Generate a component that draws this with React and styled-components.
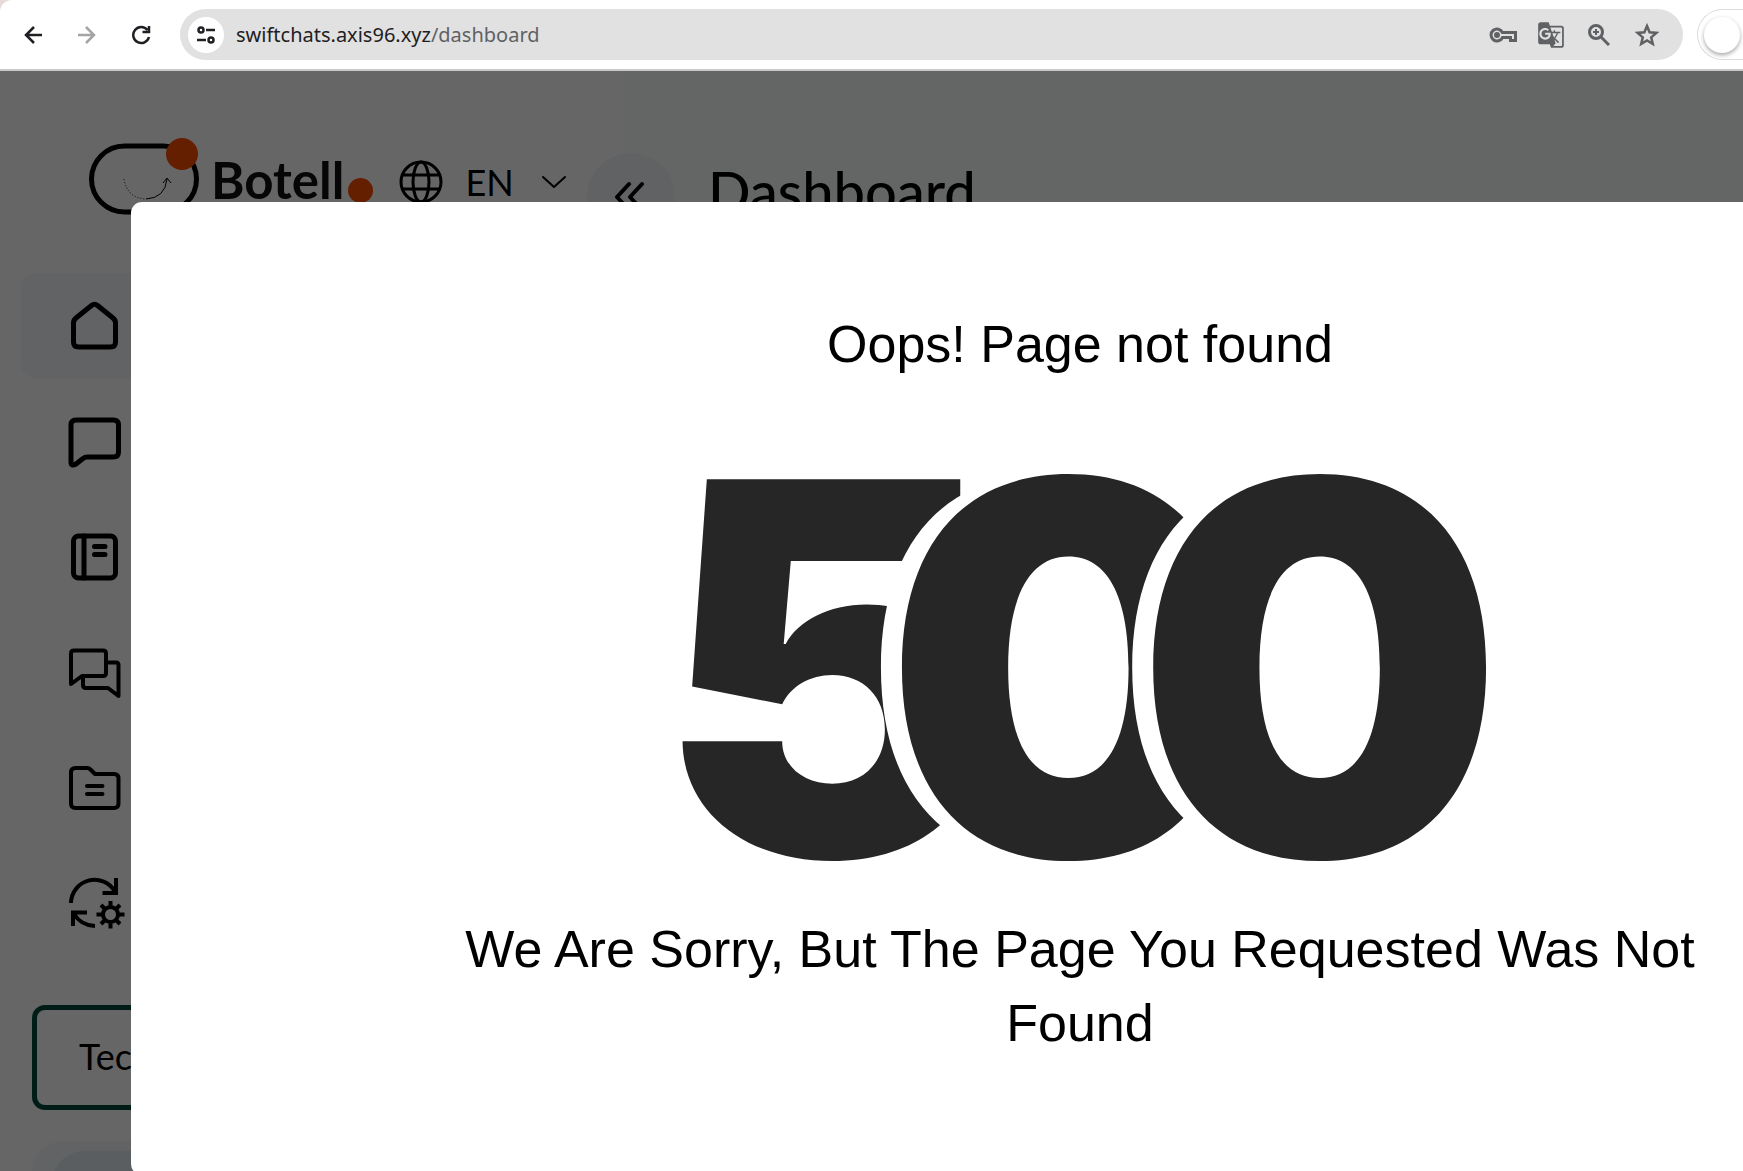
import React from 'react';
import styled, { createGlobalStyle } from 'styled-components';
import { MdGTranslate } from 'react-icons/md';

const GlobalStyle = createGlobalStyle`
  * {
    box-sizing: border-box;
  }

  body {
    margin: 0;
    background: #fff;
    color: #000;
    font-family: 'Lato', sans-serif;
  }

  h1,
  h2,
  p {
    margin: 0;
    font-weight: 400;
  }

  button,
  input,
  select {
    font: inherit;
    color: inherit;
    border: 0;
    padding: 0;
    background: none;
  }
`;

const Page = styled.div`
  height: 100vh;
  display: flex;
  flex-direction: column;
  overflow: hidden;
  background: #e6dbd9;
`;

/* browser bar */

const Toolbar = styled.header`
  display: flex;
  align-items: center;
  flex: none;
  height: 71px;
  padding-left: 18px;
  border-bottom: 2px solid #c7cac8;
  border-top-left-radius: 12px;
  background: #fff;
`;

const NavButton = styled.button`
  display: flex;
  justify-content: center;
  width: 30px;
  margin-right: 24px;
  color: ${(props) => (props.disabled ? '#a3a4a6' : '#1f2023')};
`;

const AddressBar = styled.div`
  display: flex;
  align-items: center;
  flex: 1;
  height: 51px;
  padding: 0 22px 0 8px;
  border-radius: 26px;
  background: #e1e1e1;
`;

const SiteInfo = styled.button`
  display: flex;
  align-items: center;
  justify-content: center;
  width: 36px;
  height: 36px;
  border-radius: 50%;
  background: #fff;
  color: #1f2023;
`;

const Url = styled.a`
  flex: 1;
  margin-left: 12px;
  font-family: 'Noto Sans', sans-serif;
  font-size: 20px;
  line-height: 30px;
  color: #5f6164;
  text-decoration: none;

  strong {
    font-weight: 400;
    color: #1f2023;
  }
`;

const Actions = styled.div`
  display: flex;
  gap: 20px;
  color: #5f6164;
`;

const ActionButton = styled.button`
  display: flex;
  align-items: center;
  justify-content: center;
  width: 28px;
  height: 28px;
`;

const Profile = styled.button`
  flex: none;
  width: 46px;
  height: 51px;
  margin-left: 14px;
  padding-left: 6px;
  border: 1px solid #dcdcdc;
  border-right: 0;
  border-radius: 26px 0 0 26px;
`;

const Avatar = styled.span`
  display: block;
  width: 36px;
  height: 36px;
  border-radius: 50%;
  background: #fff;
  box-shadow: 0 2px 4px rgba(0, 0, 0, 0.35);
`;

/* app behind the dialog */

const Viewport = styled.div`
  position: relative;
  display: flex;
  flex: 1;
  min-height: 0;
  overflow: hidden;
  background: #fff;
`;

const Sidebar = styled.aside`
  position: relative;
  flex: none;
  width: 624px;
`;

const Brand = styled.div`
  display: flex;
  align-items: flex-start;
  height: 202px;
  padding: 66px 0 0 88px;
`;

const BrandName = styled.span`
  margin: 11px 4px 0 9px;
  font-size: 51px;
  line-height: 64px;
  font-weight: 700;
  color: #101010;
`;

const BrandDot = styled.span`
  flex: none;
  width: 25px;
  height: 25px;
  margin-top: 41px;
  border-radius: 50%;
  background: #fa4b00;
`;

const Language = styled.label`
  display: flex;
  align-items: center;
  height: 44px;
  margin: 23px 0 0 26px;

  select {
    width: 52px;
    margin: 0 24px 0 22px;
    font-size: 36px;
    line-height: 44px;
    appearance: none;
  }
`;

const Collapse = styled.button`
  position: absolute;
  top: 82px;
  right: -51px;
  z-index: 1;
  display: flex;
  align-items: center;
  justify-content: center;
  width: 88px;
  height: 88px;
  border-radius: 50%;
  background: #f3f6fb;
`;

const Menu = styled.nav`
  display: grid;
  gap: 11px;
  padding: 0 20px 0 21px;
`;

const MenuItem = styled.a`
  display: flex;
  align-items: center;
  height: 105px;
  padding-left: 46px;
  border-radius: 14px;
  background: ${(props) => (props.$active ? '#f4f7fc' : 'transparent')};
  color: #000;

  svg {
    overflow: visible;
  }
`;

const TeamButton = styled.button`
  display: block;
  width: 560px;
  height: 105px;
  margin: 47px 32px 31px;
  padding: 0 0 4px 42px;
  border: 5px solid #004637;
  border-radius: 13px;
  font-size: 36px;
  text-align: left;
`;

const PlanCard = styled.div`
  margin: 0 32px;
  padding: 10px 20px;
  border-radius: 32px;
  background: #f4f7fb;
`;

const PlanHeader = styled.div`
  height: 105px;
  border-radius: 32px;
  background: #e4ecf1;
`;

const Main = styled.main`
  flex: 1;
  padding: 88px 0 0 84px;
  background: #f8fffb;
`;

const Heading = styled.h1`
  font-size: 56px;
  line-height: 64px;
  font-weight: 500;
`;

/* error dialog */

const Backdrop = styled.div`
  position: absolute;
  inset: 0;
  z-index: 2;
  padding: 131px 0 0 131px;
  background: rgba(0, 0, 0, 0.6);
`;

const Dialog = styled.div`
  display: flex;
  flex-direction: column;
  align-items: center;
  margin-right: -286px;
  padding: 105px 0 115px;
  border-radius: 11px;
  background: #fff;
  font-family: 'Liberation Sans', Arial, sans-serif;
  font-size: 52px;
  line-height: 74px;
  text-align: center;
`;

const Title = styled.h2`
  font-size: inherit;
`;

const Code = styled.div`
  display: flex;
  padding-top: 42px;
  font-family: 'Inter', sans-serif;
  font-size: 518px;
  font-weight: 900;
  line-height: 489px;
  color: #262626;
`;

/* the white shadow cuts a rim out of the digit before */
const Digit = styled.span`
  text-shadow: -21px 0 0 #fff;

  & + & {
    margin-left: -117px;
  }
`;

const Message = styled.p`
  max-width: 1340px;
`;

const menu = [
  {
    label: 'Home',
    stroke: 5,
    art: (
      <path d="M9 20 24.5 7.5q3-2.5 6 0L46 20q2.5 2 2.5 5v19q0 5-5 5h-32q-5 0-5-5V25q0-3 2.5-5z" />
    ),
  },
  {
    label: 'Chat',
    stroke: 5,
    art: (
      <path d="M9 6h37.5q5 0 5 5v27q0 5-5 5H20q-2 0-4 1.5L9 50q-5 3-5-2V11q0-5 5-5z" />
    ),
  },
  {
    label: 'Notebook',
    stroke: 5,
    art: (
      <>
        <rect x="6.5" y="6" width="42" height="42" rx="5" />
        <path d="M17 6v42M27.5 16.5H38M27.5 24.5H38" />
      </>
    ),
  },
  {
    label: 'Conversations',
    stroke: 4,
    art: (
      <>
        <path d="M7 4.5h29q3 0 3 3V27q0 3-3 3H15L4 38V7.5q0-3 3-3z" />
        <path d="M39 16.5h10q2.5 0 2.5 2.5v31L41 42H19q-3 0-3-3v-9" />
      </>
    ),
  },
  {
    label: 'Documents',
    stroke: 4,
    art: (
      <path d="M8.5 6H20q2 0 3.5 1.5L28 12h19q4.5 0 4.5 4.5v25q0 4.5-4.5 4.5H8.5Q4 46 4 41.5v-31Q4 6 8.5 6zM20 24h15.5M20 32h15.5" />
    ),
  },
  {
    label: 'Automation',
    stroke: 4,
    cap: 'butt',
    art: (
      <>
        <path d="M4 25A23.5 23.5 0 0 1 47.5 13M35.5 15H49V0M20 34.5H6V48M7 36q7 11.5 21 12" />
        <circle cx="43.5" cy="36.5" r="7.5" />
        <path d="M43.5 29v-6M43.5 44.5v6M35.5 36.5h-6M51.5 36.5h6M38 31l-4-4M49 31l4-4M38 42l-4 4M49 42l4 4" />
      </>
    ),
  },
];

function Icon({ width, height = width, children, stroke = 2, cap = 'round' }) {
  return (
    <svg
      width={width}
      height={height}
      viewBox={`0 0 ${width} ${height}`}
      fill="none"
      stroke="currentColor"
      strokeWidth={stroke}
      strokeLinecap={cap}
      strokeLinejoin={cap === 'round' ? 'round' : 'miter'}
      aria-hidden="true"
    >
      {children}
    </svg>
  );
}

function BrowserBar() {
  return (
    <Toolbar>
      <NavButton aria-label="Back">
        <Icon width={20} stroke={2.5} cap="butt">
          <path d="M19 10H3M11 2l-8 8 8 8" />
        </Icon>
      </NavButton>
      <NavButton aria-label="Forward" disabled>
        <Icon width={20} stroke={2.5} cap="butt">
          <path d="M1 10h16M9 2l8 8-8 8" />
        </Icon>
      </NavButton>
      <NavButton aria-label="Reload">
        <Icon width={20} stroke={2.5} cap="butt">
          <path d="M16.5 5A8 8 0 1 0 18 12M18 1v6h-6.5" />
        </Icon>
      </NavButton>
      <AddressBar>
        <SiteInfo aria-label="Site information">
          <Icon width={20} stroke={2.5} cap="butt">
            <circle cx="5" cy="5" r="2.5" />
            <circle cx="15" cy="15" r="2.5" />
            <path d="M10 5h9M1 15h9" />
          </Icon>
        </SiteInfo>
        <Url href="#dashboard">
          <strong>swiftchats.axis96.xyz</strong>/dashboard
        </Url>
        <Actions>
          <ActionButton aria-label="Passwords">
            <Icon width={28} height={16} cap="butt" stroke={3}>
              <path d="M13.5 5.5h13v8h-5v-3h-8a6 6 0 1 1 0-5z" />
              <circle cx="8" cy="8" r="1.5" />
            </Icon>
          </ActionButton>
          <ActionButton aria-label="Translate">
            <MdGTranslate size={28} />
          </ActionButton>
          <ActionButton aria-label="Zoom">
            <Icon width={22} stroke={3} cap="butt">
              <circle cx="8" cy="8" r="6.5" />
              <path d="m13 13 8 8" />
              <path d="M8 5v6M5 8h6" strokeWidth="2" />
            </Icon>
          </ActionButton>
          <ActionButton aria-label="Bookmark">
            <Icon width={24} stroke={2.5} cap="butt">
              <path d="m12 3 2.6 6.3 6.8.6-5.2 4.5 1.6 6.6-5.8-3.5L6.2 21l1.6-6.6-5.2-4.5 6.8-.6z" />
            </Icon>
          </ActionButton>
        </Actions>
      </AddressBar>
      <Profile aria-label="Profile">
        <Avatar />
      </Profile>
    </Toolbar>
  );
}

function LogoMark() {
  return (
    <svg width="114" height="80" viewBox="0 0 114 80" aria-hidden="true">
      <rect
        x="3.5"
        y="9"
        width="105"
        height="66"
        rx="33"
        fill="none"
        stroke="#000"
        strokeWidth="5"
      />
      <path
        d="M36 42q3 19 22 20"
        fill="none"
        stroke="#000"
        strokeDasharray="1 2"
      />
      <path d="M58 62q19-1 21-20M75 46l4-5 4 5" fill="none" stroke="#000" />
      <circle cx="94" cy="17" r="16" fill="#fa4b00" />
    </svg>
  );
}

export default function App() {
  return (
    <Page>
      <GlobalStyle />
      <BrowserBar />
      <Viewport>
        <Sidebar>
          <Brand>
            <LogoMark />
            <BrandName>Botell</BrandName>
            <BrandDot />
            <Language>
              <Icon width={44} stroke={3}>
                <circle cx="22" cy="22" r="20" />
                <ellipse cx="22" cy="22" rx="8" ry="20" />
                <path d="M4 15h36M4 29h36" />
              </Icon>
              <select aria-label="Language" defaultValue="EN">
                <option>EN</option>
              </select>
              <Icon width={26} height={14}>
                <path d="m2 2 11 10L24 2" />
              </Icon>
            </Language>
          </Brand>
          <Menu>
            {menu.map((item, i) => (
              <MenuItem
                key={item.label}
                href={`#${item.label.toLowerCase()}`}
                aria-label={item.label}
                $active={i === 0}
              >
                <Icon width={56} stroke={item.stroke} cap={item.cap}>
                  {item.art}
                </Icon>
              </MenuItem>
            ))}
          </Menu>
          <TeamButton>Tec</TeamButton>
          <PlanCard>
            <PlanHeader />
          </PlanCard>
          <Collapse aria-label="Collapse sidebar">
            <Icon width={32} stroke={4}>
              <path d="M14 3 2 16l12 13M27 3 15 16l12 13" />
            </Icon>
          </Collapse>
        </Sidebar>
        <Main>
          <Heading>Dashboard</Heading>
        </Main>
        <Backdrop>
          <Dialog role="dialog" aria-labelledby="error-title">
            <Title id="error-title">Oops! Page not found</Title>
            <Code>
              <Digit>5</Digit>
              <Digit>0</Digit>
              <Digit>0</Digit>
            </Code>
            <Message>
              We Are Sorry, But The Page You Requested Was Not Found
            </Message>
          </Dialog>
        </Backdrop>
      </Viewport>
    </Page>
  );
}
